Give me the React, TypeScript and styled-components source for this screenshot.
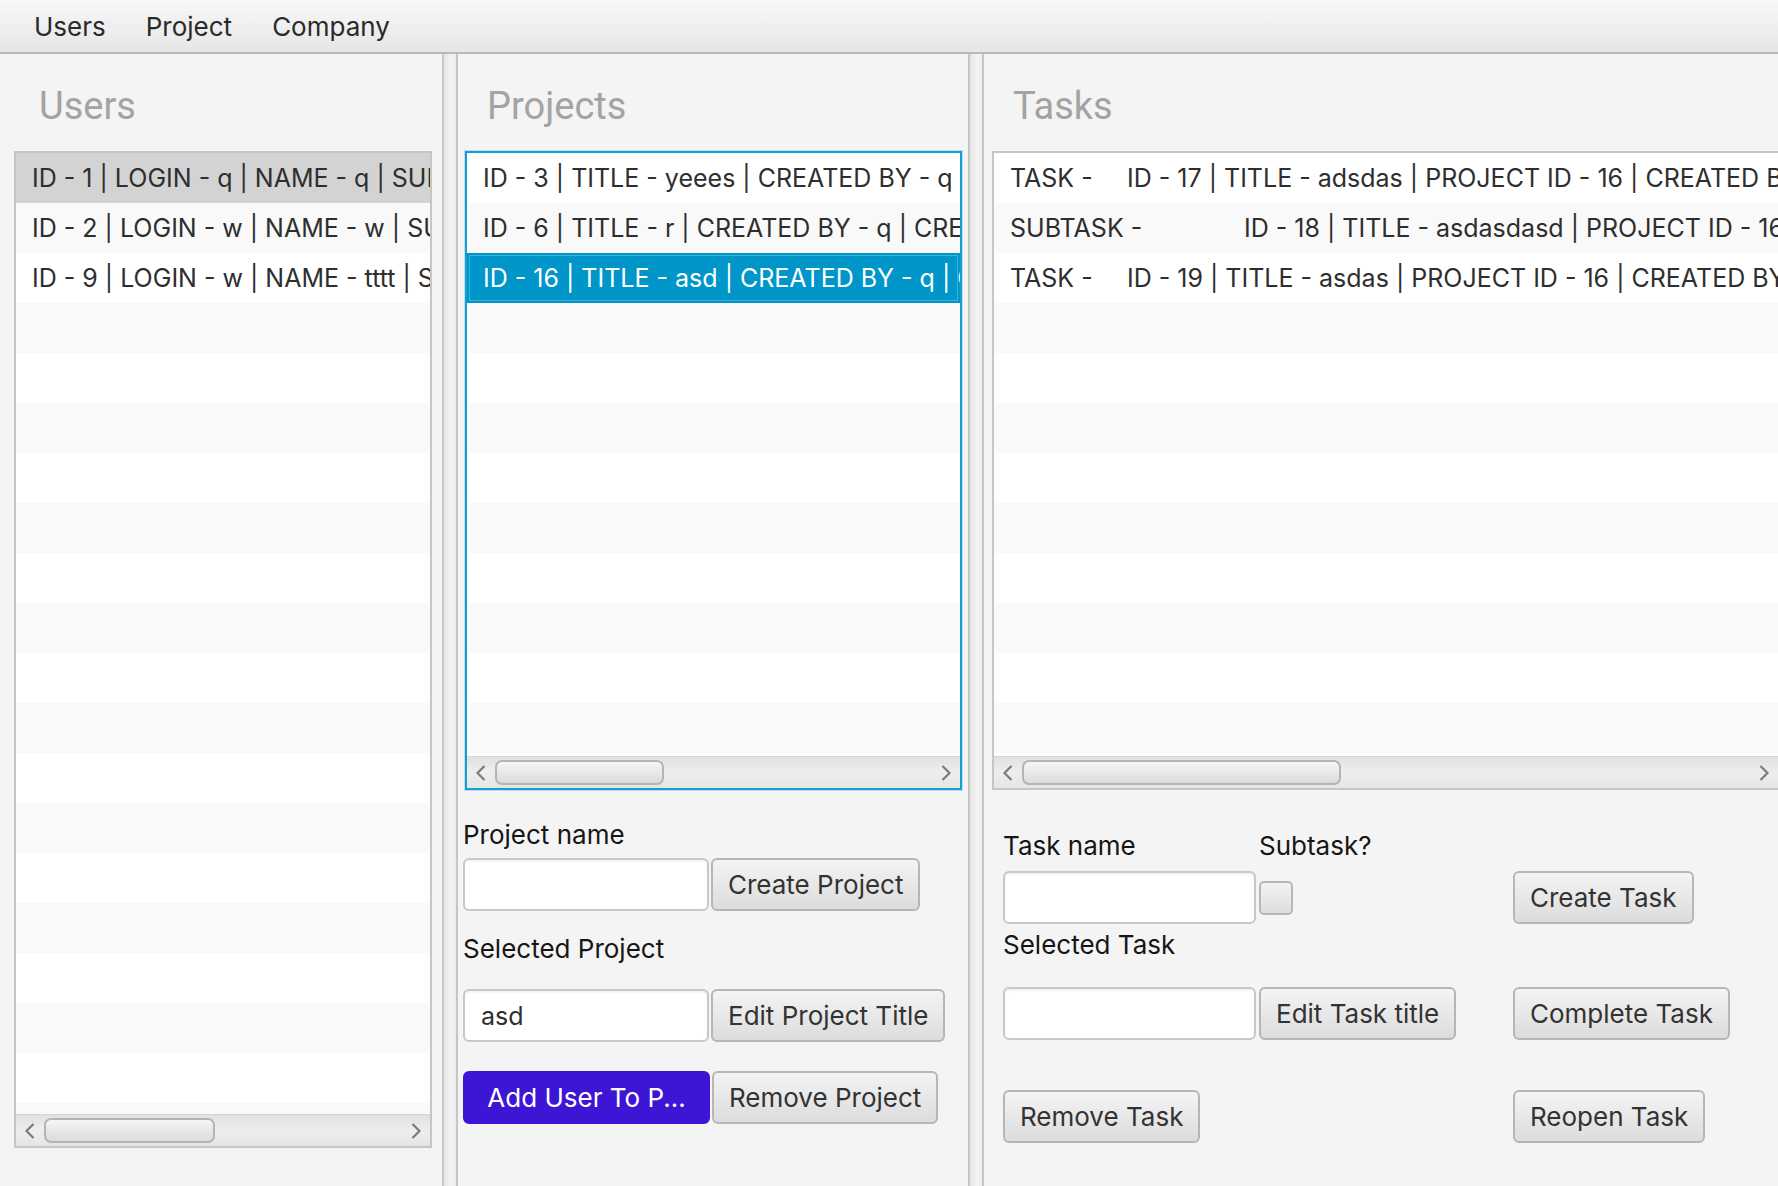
import * as React from "react";
import styled, { createGlobalStyle } from "styled-components";

const uiFont = `Inter, Roboto, "Liberation Sans", sans-serif`;

const GlobalStyle = createGlobalStyle`
  html, body {
    margin: 0;
    padding: 0;
  }

  body {
    background: #f4f4f4;
    font-family: ${uiFont};
    overflow: hidden;
  }
`;

const Window = styled.div`
  background: #f4f4f4;
  display: flex;
  flex-direction: column;
  height: 1186px;
  overflow: hidden;
  width: 1778px;
`;

const MenuBar = styled.nav`
  align-items: center;
  background: linear-gradient(#f8f8f8, #e6e6e6);
  border-bottom: 2px solid #bababa;
  display: flex;
  flex: none;
  height: 52px;
  padding-left: 14px;
`;

const MenuItem = styled.span`
  color: #2a2a2a;
  font-size: 26px;
  padding: 0 20px;
`;

const Panes = styled.div`
  display: flex;
  flex: 1;
  min-height: 0;
`;

const Pane = styled.section<{ $width: number; $pad: string }>`
  box-sizing: border-box;
  display: flex;
  flex: none;
  flex-direction: column;
  padding: ${(p) => p.$pad};
  width: ${(p) => p.$width}px;
`;

const Divider = styled.div`
  background: linear-gradient(to right, #e6e6e6, #f3f3f3 60%, #ebebeb);
  border-left: 2px solid #c6c6c6;
  border-right: 2px solid #c6c6c6;
  box-sizing: border-box;
  flex: none;
  width: 16px;
`;

const Heading = styled.h2<{ $indent: number }>`
  box-sizing: border-box;
  color: #a3a3a3;
  font-family: Roboto, "Liberation Sans", sans-serif;
  font-size: 38px;
  font-weight: 400;
  height: 97px;
  line-height: 44px;
  margin: 0;
  padding: 30px 0 0 ${(p) => p.$indent}px;
`;

const ListBox = styled.div<{ $height: number; $focused?: boolean; $open?: boolean }>`
  background: #fff;
  border: 2px solid ${(p) => (p.$focused ? "#129fd6" : "#c6c6c6")};
  border-right-width: ${(p) => (p.$open ? 0 : 2)}px;
  box-shadow: ${(p) => (p.$focused ? "0 0 0 1px rgba(18, 159, 214, 0.25)" : "none")};
  box-sizing: border-box;
  display: flex;
  flex: none;
  flex-direction: column;
  height: ${(p) => p.$height}px;
  margin-left: ${(p) => (p.$focused ? 2 : 0)}px;
  overflow: hidden;
`;

const Rows = styled.div`
  flex: 1;
  min-height: 0;
  overflow: hidden;
`;

const Row = styled.div<{ $odd: boolean; $selected?: "grey" | "blue" }>`
  background: ${(p) =>
    p.$selected === "blue" ? "#0096c9" : p.$selected === "grey" ? "#d3d3d3" : p.$odd ? "#f9f9f9" : "#fff"};
  box-shadow: ${(p) => (p.$selected === "blue" ? "inset 0 0 0 2px #0096c9, inset 0 0 0 3px #3ab0dd" : "none")};
  box-sizing: border-box;
  color: ${(p) => (p.$selected === "blue" ? "#fff" : "#2e2e2e")};
  font-size: 25px;
  height: 50px;
  line-height: 50px;
  overflow: hidden;
  padding-left: 16px;
  tab-size: 117px;
  white-space: pre;
`;

const ScrollBar = styled.div`
  align-items: center;
  background: linear-gradient(#e1e1e1, #eeeeee 50%, #e5e5e5);
  border-top: 1px solid #d6d6d6;
  display: flex;
  flex: none;
  height: 31px;
`;

const Arrow = styled.span`
  align-items: center;
  display: flex;
  flex: none;
  justify-content: center;
  width: 28px;
`;

const Track = styled.div`
  align-items: center;
  display: flex;
  flex: 1;
  height: 100%;
`;

const Thumb = styled.div<{ $width: number }>`
  background: linear-gradient(#f5f5f5, #dcdcdc);
  border: 2px solid #b4b4b4;
  border-radius: 7px;
  box-sizing: border-box;
  height: 25px;
  width: ${(p) => p.$width}px;
`;

const Form = styled.div<{ $top: number; $left: number }>`
  display: flex;
  flex-direction: column;
  padding: ${(p) => p.$top}px 0 0 ${(p) => p.$left}px;
`;

const FormRow = styled.div<{ $mt: number }>`
  align-items: center;
  display: flex;
  gap: 2px;
  margin-top: ${(p) => p.$mt}px;
`;

const TaskGrid = styled.div<{ $mt: number }>`
  align-items: center;
  column-gap: 3px;
  display: grid;
  grid-template-columns: 253px 251px auto;
  justify-items: start;
  margin-top: ${(p) => p.$mt}px;
`;

const FieldLabel = styled.label`
  color: #161616;
  font-size: 26px;
  line-height: 30px;
`;

const TextField = styled.input<{ $width: number }>`
  background: #fff;
  border: 2px solid #c8c8c8;
  border-radius: 6px;
  box-shadow: inset 0 2px 2px rgba(0, 0, 0, 0.05);
  box-sizing: border-box;
  color: #2e2e2e;
  font-family: ${uiFont};
  font-size: 25px;
  height: 53px;
  outline: none;
  padding: 0 16px;
  width: ${(p) => p.$width}px;
`;

const Button = styled.button<{ $primary?: boolean; $width?: number }>`
  background: ${(p) => (p.$primary ? "#3d16d5" : "linear-gradient(#f4f4f4, #dcdcdc)")};
  border: 2px solid ${(p) => (p.$primary ? "#3d16d5" : "#b6b6b6")};
  border-radius: 6px;
  box-sizing: border-box;
  color: ${(p) => (p.$primary ? "#fff" : "#333")};
  font-family: ${uiFont};
  font-size: 26px;
  height: 53px;
  padding: 0 15px;
  white-space: nowrap;
  width: ${(p) => (p.$width ? `${p.$width}px` : "auto")};
`;

const CheckBox = styled.span`
  background: linear-gradient(#f3f3f3, #dddddd);
  border: 2px solid #b6b6b6;
  border-radius: 5px;
  box-sizing: border-box;
  display: block;
  height: 34px;
  width: 34px;
`;

function Chevron({ dir }: { dir: "left" | "right" }) {
  return (
    <svg width="12" height="18" viewBox="0 0 12 18">
      <polyline
        points={dir === "left" ? "9.5,2 2.5,9 9.5,16" : "2.5,2 9.5,9 2.5,16"}
        fill="none"
        stroke="#7c7c7c"
        strokeWidth="2.2"
      />
    </svg>
  );
}

function HScroll({ thumb }: { thumb: number }) {
  return (
    <ScrollBar>
      <Arrow>
        <Chevron dir="left" />
      </Arrow>
      <Track>
        <Thumb $width={thumb} />
      </Track>
      <Arrow>
        <Chevron dir="right" />
      </Arrow>
    </ScrollBar>
  );
}

interface ListProps {
  items: string[];
  height: number;
  thumb: number;
  selected?: { index: number; tone: "grey" | "blue" };
  focused?: boolean;
  open?: boolean;
}

function ListView(props: ListProps) {
  const rows = Array.from({ length: 22 }, (_, i) => props.items[i] ?? "");
  return (
    <ListBox $height={props.height} $focused={props.focused} $open={props.open}>
      <Rows>
        {rows.map((text, i) => (
          <Row
            key={i}
            $odd={i % 2 === 1}
            $selected={props.selected?.index === i ? props.selected.tone : undefined}
          >
            {text}
          </Row>
        ))}
      </Rows>
      <HScroll thumb={props.thumb} />
    </ListBox>
  );
}

const users = [
  "ID - 1 | LOGIN - q | NAME - q | SURNAME - q",
  "ID - 2 | LOGIN - w | NAME - w | SURNAME - w",
  "ID - 9 | LOGIN - w | NAME - tttt | SURNAME - tttt",
];

const projects = [
  "ID - 3 | TITLE - yeees | CREATED BY - q | CREATED AT - 2019",
  "ID - 6 | TITLE - r | CREATED BY - q | CREATED AT - 2019",
  "ID - 16 | TITLE - asd | CREATED BY - q | CREATED AT - 2019",
];

const tasks = [
  "TASK -\tID - 17 | TITLE - adsdas | PROJECT ID - 16 | CREATED BY - q",
  "SUBTASK -\tID - 18 | TITLE - asdasdasd | PROJECT ID - 16 | CREATED BY - q",
  "TASK -\tID - 19 | TITLE - asdas | PROJECT ID - 16 | CREATED BY - q",
];

export default function App() {
  return (
    <>
      <GlobalStyle />
      <Window>
        <MenuBar>
          <MenuItem>Users</MenuItem>
          <MenuItem>Project</MenuItem>
          <MenuItem>Company</MenuItem>
        </MenuBar>

        <Panes>
          <Pane $width={442} $pad="0 10px 0 14px">
            <Heading $indent={25}>Users</Heading>
            <ListView items={users} height={997} thumb={171} selected={{ index: 0, tone: "grey" }} />
          </Pane>

          <Divider />

          <Pane $width={510} $pad="0 6px 0 5px">
            <Heading $indent={24}>Projects</Heading>
            <ListView
              items={projects}
              height={639}
              thumb={169}
              focused
              selected={{ index: 2, tone: "blue" }}
            />
            <Form $top={30} $left={0}>
              <FieldLabel>Project name</FieldLabel>
              <FormRow $mt={8}>
                <TextField $width={246} />
                <Button>Create Project</Button>
              </FormRow>
              <FormRow $mt={23}>
                <FieldLabel>Selected Project</FieldLabel>
              </FormRow>
              <FormRow $mt={25}>
                <TextField $width={246} defaultValue="asd" />
                <Button>Edit Project Title</Button>
              </FormRow>
              <FormRow $mt={29}>
                <Button $primary $width={247}>
                  Add User To P...
                </Button>
                <Button>Remove Project</Button>
              </FormRow>
            </Form>
          </Pane>

          <Divider />

          <Pane $width={794} $pad="0 0 0 8px">
            <Heading $indent={21}>Tasks</Heading>
            <ListView items={tasks} height={639} thumb={319} open />
            <Form $top={41} $left={11}>
              <TaskGrid $mt={0}>
                <FieldLabel>Task name</FieldLabel>
                <FieldLabel>Subtask?</FieldLabel>
                <span />
              </TaskGrid>
              <TaskGrid $mt={10}>
                <TextField $width={253} />
                <CheckBox />
                <Button>Create Task</Button>
              </TaskGrid>
              <TaskGrid $mt={6}>
                <FieldLabel>Selected Task</FieldLabel>
              </TaskGrid>
              <TaskGrid $mt={27}>
                <TextField $width={253} />
                <Button>Edit Task title</Button>
                <Button>Complete Task</Button>
              </TaskGrid>
              <TaskGrid $mt={50}>
                <Button>Remove Task</Button>
                <span />
                <Button>Reopen Task</Button>
              </TaskGrid>
            </Form>
          </Pane>
        </Panes>
      </Window>
    </>
  );
}
